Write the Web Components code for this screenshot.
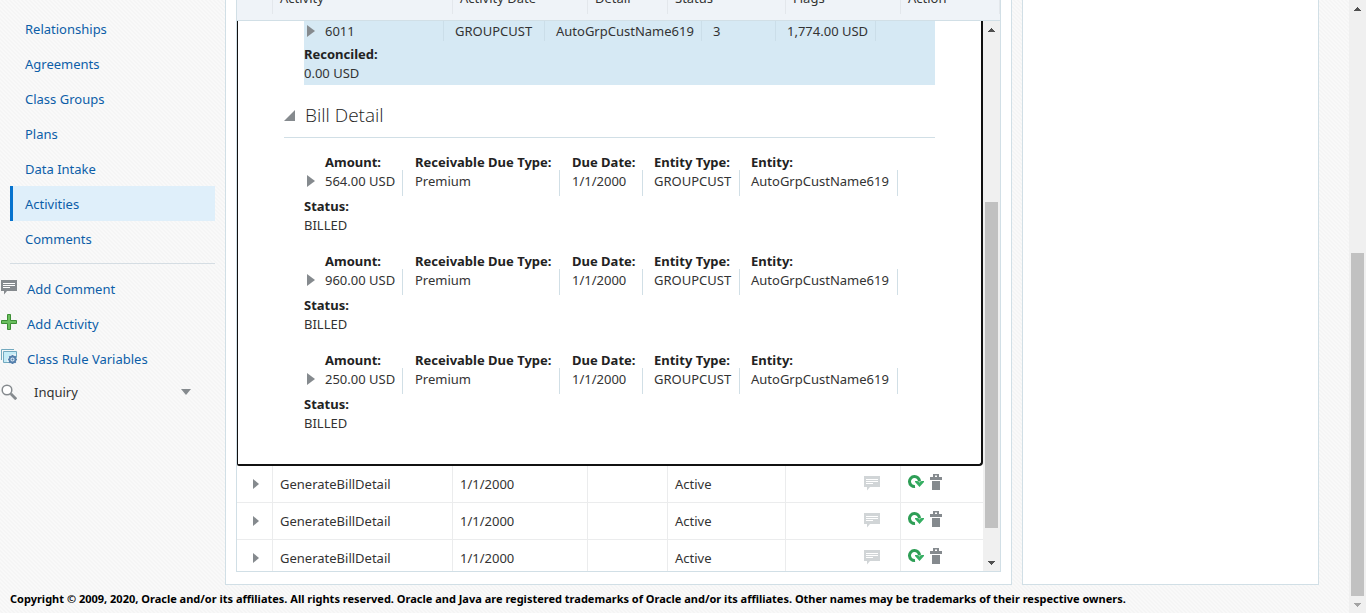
<!DOCTYPE html>
<html lang="en">
<head>
<meta charset="utf-8">
<title>Activities</title>
<style>
html, body { height: 100%; }
body {
  margin: 0; overflow: hidden;
  font: 13px/20px "Noto Sans", "Open Sans", sans-serif;
  color: #333;
  --line: #d1dfe6; --link: #0c5ea8;
}
</style>
</head>
<body>
<app-shell>
  <side-nav slot="nav"></side-nav>
  <activity-grid slot="main"></activity-grid>
  <copyright-bar slot="footer">Copyright © 2009, 2020, Oracle and/or its affiliates. All rights reserved. Oracle and Java are registered trademarks of Oracle and/or its affiliates. Other names may be trademarks of their respective owners.</copyright-bar>
</app-shell>
<script>
const BASE = `
*, *::before { box-sizing: border-box; }
:host([hidden]) { display: none; }
button { border: 0; background: none; padding: 0; margin: 0; font: inherit; color: inherit; display: inline-flex; align-items: center; }
dl, dt, dd, h2, ul { margin: 0; padding: 0; }
dt { font-weight: 700; color: #222; }
svg { display: block; }
`;

const define = (name, render) => customElements.define(name, class extends HTMLElement {
  connectedCallback() {
    if (this.shadowRoot) return;
    const root = this.attachShadow({ mode: "open" });
    const [css, html] = render(this);
    root.innerHTML = `<style>${BASE}${css}</style>${html}`;
  }
});

const ICONS = {
  comment: `<path fill="currentColor" d="M0 0h16v11H6l-3 3.5V11H0z"/><path stroke="#fff" d="M2 3.5h12M2 5.5h12M2 7.5h7"/>`,
  plus: `<path fill="#6abf5e" stroke="#3c8e35" stroke-linejoin="round" d="M6.5.5h3v6h6v3h-6v6h-3v-6h-6v-3h6z"/>`,
  rule: `<path fill="none" stroke="#72a9bf" d="M.5 11V.5H13"/><path fill="#c6ecf7" stroke="#72a9bf" d="M2.500 2.500h13v6h-7v5h-6z"/><path fill="#eef5f8" d="M6 13c0-5 3-8 9-8v3H8v5z"/><circle cx="11.500" cy="10.500" r="3" fill="#dbe8f3" stroke="#5580ad" stroke-width="1.800"/><path stroke="#5580ad" stroke-width="1.500" d="M11.500 6v2M11.500 13v2M7 10.500h2M14 10.500h2M8.300 7.300l1.400 1.400M13.300 12.300l1.400 1.400M14.700 7.300l-1.400 1.400M9.700 12.300l-1.400 1.400"/><circle cx="11.500" cy="10.500" r="1" fill="#5580ad"/>`,
  search: `<circle cx="6" cy="6" r="4.800" fill="#fff" stroke="#858a8e" stroke-width="1.500"/><path stroke="#858a8e" stroke-width="2.800" d="M9.800 9.800l5.400 5.400"/>`,
  refresh: `<path fill="none" stroke="#2e9e56" stroke-width="3" d="M7 11.500A5 5 0 1 1 11.500 6.500"/><path fill="#35ae62" d="M7 6h2.500l2 1.500L13.500 6H16v1l-4.500 5L7 7z"/>`,
  trash: `<path fill="#858a8e" d="M3 0h6v3h3v3H0V3h3zM5 1.500V3h2V1.500zM2 7h8v9H2z"/>`,
  right: `<path fill="#858a8e" d="M0 0l8 6-8 6z"/>`,
  rightSmall: `<path fill="#858a8e" d="M0 0l6 5-6 5z"/>`,
  open: `<path fill="#858a8e" d="M11 0v11H0z"/>`,
  down: `<path fill="#858a8e" d="M0 0h10L5 6z"/>`
};
const icon = (name, w, h) => `<svg width="${w}" height="${h}" viewBox="0 0 ${w} ${h}" aria-hidden="true">${ICONS[name]}</svg>`;

define("app-shell", () => [`
  :host { display: flex; height: 100vh; }
  .page {
    flex: 1; min-width: 0; display: flex; flex-direction: column;
    background: linear-gradient(45deg, #f5f5f5 25%, #f9f9f9 25% 50%, #f5f5f5 50% 75%, #f9f9f9 75%) 0 0 / 4px 4px;
  }
  .columns { flex: 1; min-height: 0; display: grid; grid-template: minmax(0, 1fr) / 225px minmax(0, 787fr) minmax(0, 307fr); padding-right: 30px; }
  main, aside { border: 1px solid var(--line); border-top: 0; background: #fff; min-width: 0; }
  main { display: flex; padding: 0 10px 12px; }
  aside { margin-left: 10px; }
`, `
  <div class="page">
    <div class="columns">
      <slot name="nav"></slot>
      <main><slot name="main"></slot></main>
      <aside></aside>
    </div>
    <slot name="footer"></slot>
  </div>
  <scroll-rail before="236" thumb="343" after="0"></scroll-rail>
`]);

define("scroll-rail", el => [`
  :host { display: flex; flex-direction: column; width: 17px; flex: none; background: #f0f0f0; }
  .cap { height: 17px; flex: none; display: grid; place-items: center; color: #505050; }
  .cap.end { color: ${el.getAttribute("after") === "0" ? "#a3a3a3" : "#505050"}; }
  .before { flex: ${el.getAttribute("before")}; }
  .thumb { flex: ${el.getAttribute("thumb")}; margin: 0 2px; background: #c1c1c1; }
  .after { flex: ${el.getAttribute("after")}; }
`, `
  <div class="cap"><svg width="7" height="4" shape-rendering="crispEdges"><path fill="currentColor" d="M3 0h1v1h1v1h1v1h1v1H0V3h1V2h1V1h1z"/></svg></div>
  <div class="before"></div><div class="thumb"></div><div class="after"></div>
  <div class="cap end"><svg width="7" height="4" shape-rendering="crispEdges"><path fill="currentColor" d="M0 0h7v1H6v1H5v1H4v1H3V3H2V2H1V1H0z"/></svg></div>
`]);

define("side-nav", () => [`
  :host { display: block; padding-top: 11px; }
  ul { list-style: none; margin: 0 10px; padding-bottom: 7px; border-bottom: 1px solid #d5dde3; }
  a { color: var(--link); text-decoration: none; }
  li a { display: block; line-height: 33px; padding: 2px 0 0 12px; border-left: 3px solid transparent; }
  li a.on { background: #dfeffa; border-color: #0572ce; }
  .tools { padding: 7px 0 0 1px; }
  .tools a, .tools button { display: flex; align-items: center; height: 35px; gap: 10px; }
  .tools a svg { margin-bottom: 3px; }
  .tools button { height: 31px; gap: 17px; width: 190px; }
  .tools button svg:last-child { margin-left: auto; }
  .tools i { color: #858a8e; }
`, `
  <nav>
    <ul>
      ${["Relationships", "Agreements", "Class Groups", "Plans", "Data Intake", "Activities", "Comments"]
        .map(t => `<li><a href="#"${t === "Activities" ? ' class="on" aria-current="page"' : ""}>${t}</a></li>`).join("")}
    </ul>
    <div class="tools">
      <a href="#"><i>${icon("comment", 16, 15)}</i>Add Comment</a>
      <a href="#"><i>${icon("plus", 16, 16)}</i>Add Activity</a>
      <a href="#"><i>${icon("rule", 16, 16)}</i>Class Rule Variables</a>
      <button type="button">${icon("search", 16, 16)}<span>Inquiry</span>${icon("down", 10, 6)}</button>
    </div>
  </nav>
`]);

define("activity-grid", () => {
  const cols = `<colgroup><col class="c0"><col class="c1"><col class="c2"><col class="c3"><col class="c4"><col class="c5"><col></colgroup>`;
  const row = `<tr>
    <td class="tog"><button type="button" aria-label="Expand">${icon("rightSmall", 6, 10)}</button></td>
    <td>GenerateBillDetail</td><td>1/1/2000</td><td></td><td>Active</td>
    <td class="flag"><button type="button" aria-label="Comments">${icon("comment", 16, 15)}</button></td>
    <td><div class="acts"><button type="button" aria-label="Reprocess">${icon("refresh", 16, 14)}</button><button type="button" aria-label="Delete">${icon("trash", 12, 16)}</button></div></td>
  </tr>`;
  return [`
  :host { flex: 1; min-width: 0; display: flex; flex-direction: column; border: 1px solid var(--line); border-top: 0; overflow: hidden; }
  table { width: 100%; border-collapse: separate; border-spacing: 0; table-layout: fixed; }
  .c0 { width: 36px; } .c1 { width: 180px; } .c2 { width: 135px; } .c3 { width: 80px; } .c4 { width: 118px; } .c5 { width: 115px; }
  .head { height: 21px; flex: none; display: flex; align-items: flex-end; overflow: hidden; background: #eff3f8; border-bottom: 1px solid var(--line); }
  .head table { margin-bottom: 6px; }
  th { font-weight: 400; text-align: left; height: 30px; padding: 0 7px 2px; border-right: 1px solid #e3e7ec; }
  .body { flex: 1; min-height: 0; display: flex; }
  .view { flex: 1; min-width: 0; overflow: hidden; }
  td { height: 37px; padding: 0 7px; border-right: 1px solid #ebeced; border-bottom: 1px solid #ebeced; }
  td:last-child { border-right: 0; }
  td.tog { padding: 0 0 0 16px; }
  td.tog button, .flag button { display: block; }
  td.flag { padding: 0 20px 2px 0; color: #d1d5d7; }
  .flag button { margin-left: auto; }
  .acts { display: flex; align-items: center; gap: 6px; padding-bottom: 4px; }
`, `
  <div class="head"><table>${cols}<thead><tr><th></th>
    ${["Activity", "Activity Date", "Detail", "Status", "Flags", "Action"].map(t => `<th scope="col">${t}</th>`).join("")}
  </tr></thead></table></div>
  <div class="body">
    <div class="view">
      <activity-detail></activity-detail>
      <table>${cols}<tbody>${row}${row}${row}</tbody></table>
    </div>
    <scroll-rail before="164" thumb="326" after="26"></scroll-rail>
  </div>
`]; });

define("activity-detail", () => [`
  :host { display: block; padding: 0 46px 31px; border: solid #111; border-width: 0 2px 2px 1px; border-radius: 0 0 4px 2px; }
  .summary { margin-left: 20px; height: 64px; background: #d6e9f4; }
  .line { display: grid; grid-template-columns: 21px 119px 101px 157px 74px 100px; height: 16px; }
  .line > span { border-right: 1px solid #cbdee9; padding-left: 11px; white-space: nowrap; }
  .line > span:nth-of-type(1) { padding-left: 0; }
  .line button { height: 20px; padding-left: 3px; }
  .summary dl { line-height: 19px; padding-top: 8px; }
  .section { display: flex; align-items: center; padding: 16px 0 8px; border-bottom: 1px solid var(--line); }
  h2 { font-size: 19px; line-height: 28px; font-weight: 300; margin-left: 10px; color: #222; font-family: "Open Sans", "Noto Sans", sans-serif; }
  .list { display: grid; gap: 18px; padding: 16px 0 0 20px; }
`, `
  <div class="summary">
    <div class="line"><button type="button" aria-label="Expand">${icon("right", 8, 12)}</button><span>6011</span><span>GROUPCUST</span><span>AutoGrpCustName619</span><span>3</span><span>1,774.00 USD</span></div>
    <dl><dt>Reconciled:</dt><dd>0.00 USD</dd></dl>
  </div>
  <div class="section"><button type="button" aria-label="Collapse">${icon("open", 11, 11)}</button><h2>Bill Detail</h2></div>
  <div class="list">
    <bill-entry amount="564.00 USD"></bill-entry>
    <bill-entry amount="960.00 USD"></bill-entry>
    <bill-entry amount="250.00 USD"></bill-entry>
  </div>
`]);

define("bill-entry", el => {
  const fields = [["Amount:", el.getAttribute("amount")], ["Receivable Due Type:", "Premium"], ["Due Date:", "1/1/2000"], ["Entity Type:", "GROUPCUST"], ["Entity:", "AutoGrpCustName619"]];
  return [`
  :host { display: block; white-space: nowrap; }
  .fields { display: grid; grid-template-columns: 21px 78px 157px 83px 97px 158px; }
  .fields > button { height: 22px; padding-left: 3px; align-self: end; margin-bottom: 4px; }
  .fields dt { line-height: 16px; }
  .fields dd { line-height: 22px; height: 26px; border-right: 1px solid var(--line); }
  .fields dl + dl dt, .fields dl + dl dd { padding-left: 12px; }
  .fields dl:nth-of-type(n + 4) dt, .fields dl:nth-of-type(n + 4) dd { padding-left: 11px; }
  .status { line-height: 19px; padding-top: 1px; }
`, `
  <div class="fields"><button type="button" aria-label="Expand">${icon("right", 8, 12)}</button>
    ${fields.map(([k, v]) => `<dl><dt>${k}</dt><dd>${v}</dd></dl>`).join("")}
  </div>
  <dl class="status"><dt>Status:</dt><dd>BILLED</dd></dl>
`]; });

define("copyright-bar", () => [`
  :host { display: block; flex: none; height: 28px; line-height: 28px; padding-left: 10px; font-size: 11px; font-weight: 700; color: #000; white-space: nowrap; }
`, `<footer><slot></slot></footer>`]);
</script>
</body>
</html>
